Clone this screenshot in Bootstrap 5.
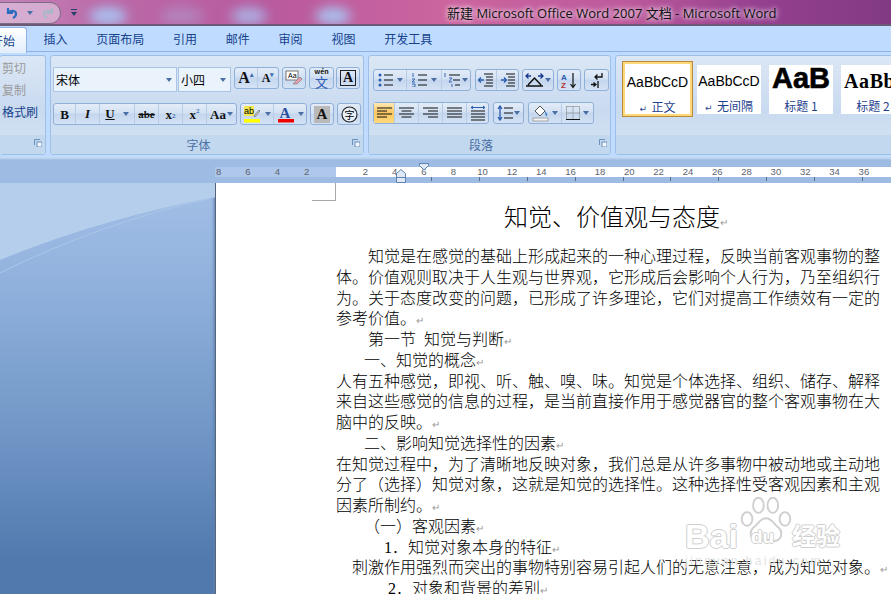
<!DOCTYPE html>
<html lang="zh-CN">
<head>
<meta charset="UTF-8" />
<title>新建 Microsoft Office Word 2007 文档 - Microsoft Word</title>
<link href="https://cdn.jsdelivr.net/npm/bootstrap@5.3.0/dist/css/bootstrap.min.css" rel="stylesheet" />
<style>
html, body { height: 594px; overflow: hidden; }
body { font-family: "Liberation Serif", "Noto Sans CJK SC", serif; background: #fff; color: #000; position: relative; }
.ui-font { font-family: "Noto Sans CJK SC", sans-serif; }
.win-title { height: 26px; background: linear-gradient(90deg, #c482b8 0, #bb6aa8 12%, #b85a9e 30%, #cc659f 50%, #bd5a9c 70%, #95408f 85%, #823a84 100%); border-bottom: 2px solid #6b5a75; position: relative; overflow: hidden; }
.win-blot { height: 18px; margin-top: 7px; border-radius: 50%; filter: blur(6px); background: #a9c0ee; flex: none; }
.qat-pill { width: 63px; height: 22px; margin-top: 2px; margin-left: -2px; border: 1px solid #7c6c84; border-radius: 0 11px 11px 0; background: rgba(226,205,228,.6); flex: none; }
.qat-more { margin: 9px 0 0 9px; width: 8px; flex: none; }
.win-name { position: absolute; left: 447px; top: 5px; font: 13px/16px "Open Sans", "Noto Sans CJK SC", sans-serif; color: #111; text-shadow: 0 0 4px #f6e6f2, 0 0 6px #f6e6f2; white-space: nowrap; }
.tab-bar { height: 26px; background: #bfdbff; border-bottom: 1px solid #8db2e3; font-size: 12px; color: #15428b; }
.tab-item { padding: 0 14.4px; line-height: 25px; white-space: nowrap; }
.tab-on { margin-left: -10px; padding: 0 12px 0 0; width: 37px; background: linear-gradient(#fff, #e3eefb); border: 1px solid #8db2e3; border-bottom: 0; border-radius: 0 3px 0 0; height: 26px; margin-top: 1px; margin-right: 2px; }
.rb-band { height: 105px; background: #bfdbff; padding-top: 3px; overflow: hidden; }
.rb-group { height: 100px; border: 1px solid #9ebfe6; border-radius: 3px; background: linear-gradient(#dbe7f5, #c9daf0 55%, #d6e5f5); position: relative; flex: none; }
.rb-clip { width: 46px; margin-right: 4px; border-left: 0; font-size: 12px; padding: 0 0 0 2px; }
.clip-line { height: 22px; line-height: 22px; color: #9a9a9a; }
.clip-line:first-child { margin-top: 1px; }
.clip-on { color: #15428b; }
.rb-font { width: 314px; margin-right: 4px; padding: 11px 0 0 2px; }
.rb-para { width: 243px; margin-right: 4px; padding: 13px 0 0 4px; }
.rb-style { width: 290px; }
.rb-foot { position: absolute; left: 0; right: 0; bottom: 0; height: 19px; background: #c2d8ee; color: #4a6fa5; font-size: 12px; text-align: center; line-height: 20px; padding-right: 17px; }
.rb-launch { position: absolute; right: 3px; bottom: 7px; width: 8px; height: 8px; display: block; }
.rb-row { height: 22px; gap: 3px; margin-bottom: 14px; }
.rb-box { height: 100%; border: 1px solid #8fb0d9; border-radius: 3px; background: linear-gradient(#e3ecf8, #d3e1f3 45%, #c4d6ee 50%, #d4e2f4); display: flex; align-items: stretch; flex: none; }
.rb-btn { display: flex; align-items: center; justify-content: center; border-right: 1px solid #b5cbe6; flex: none; font-size: 13px; line-height: 1; color: #111; }
.rb-btn:last-child { border-right: 0; }
.rb-active { background: linear-gradient(#fde9b0, #fbc65f 50%, #fdd97f); }
.rb-arrow { width: 0; height: 0; border: 3px solid transparent; border-top: 4px solid #4a6fa5; border-bottom: 0; margin-left: 3px; flex: none; }
.rb-combo { height: 25px; background: #eaf2fb; border: 1px solid #a9c4e4; display: flex; align-items: center; justify-content: space-between; padding: 0 4px 0 2px; font-size: 12px; flex: none; }
.tx-b { font-family: "Liberation Serif", serif; font-weight: 700; }
.style-gallery { padding: 5px 0 0 6px; }
.style-tile { height: 49px; background: #fff; margin-top: 4px; flex: none; text-align: center; overflow: hidden; white-space: nowrap; }
.style-tile-on { height: 56px; margin-top: 0; width: 71px; border: 1px solid #b78a3d; box-shadow: inset 0 0 0 2px #fcd878; padding-top: 4px; }
.style-demo { height: 33px; line-height: 33px; font-size: 14px; font-family: "Liberation Sans", sans-serif; color: #000; }
.style-name { font-size: 12px; line-height: 15px; color: #1f3f8f; }
.style-arrow { font-size: 9px; font-family: "DejaVu Sans", sans-serif; margin-right: 2px; }
.style-strong { font: 700 29px/27px "Liberation Sans", sans-serif; height: 33px; -webkit-text-stroke: .6px #000; }
.style-serif { font: 700 20px/33px "Liberation Serif", serif; text-align: left; padding-left: 3px; letter-spacing: .6px; }
.ruler-strip { height: 26px; background: linear-gradient(#c2d8ef 0, #c2d8ef 1px, #9dbbe3 3px, #9dbbe3 100%); padding-top: 10px; position: relative; overflow: hidden; }
.ruler-scale { height: 10px; background: linear-gradient(90deg, transparent 0, transparent 11px, #afc7ea 11px, #afc7ea 132px, #fff 132px); font: 9.5px/10px "Liberation Sans", sans-serif; color: #5c6470; width: 800px; margin-left: 204px; }
.ruler-scale span { width: 29.33px; text-align: center; flex: none; }
.ruler-ticks { height: 4px; margin-left: 431px; background: repeating-linear-gradient(90deg, #5d6f88 0, #5d6f88 1px, transparent 1px, transparent 47.9px); }
.ruler-cap { position: absolute; }
.work-area { height: 411px; }
.side-pane { width: 216px; flex: none; background: linear-gradient(#a2bfe6 0, #93b3de 22%, #7299c8 58%, #5279ad 92%, #5279ad 100%); border-right: 1px solid #55667e; box-shadow: inset -3px 0 3px -2px #5f7da8; }
.pane-swoosh { display: block; }
.doc-page { flex: 1; background: #fff; padding: 0 11px 0 120px; position: relative; overflow: hidden; }
.crop-mark { position: absolute; left: 96px; top: 0; width: 24px; height: 18px; border-right: 1px solid #a8a8a8; border-bottom: 1px solid #a8a8a8; }
.doc-head { font-size: 24px; line-height: 32px; margin: 19px 0 13px; text-align: center; padding-left: 16px; white-space: nowrap; font-weight: 300; }
.doc-line { font-size: 16px; line-height: 20.75px; margin: 0; text-align: justify; font-weight: 300; }
.doc-nowrap { white-space: nowrap; text-align: left; }
.ind-32 { text-indent: 32px; }
.ind-28 { text-indent: 28px; }
.ind-48 { text-indent: 48px; }
.ind-16 { text-indent: 16px; }
.ind-52 { text-indent: 52px; }
.ret-mark { color: #9a9a9a; font-size: 10px; line-height: 0; font-family: "DejaVu Sans", sans-serif; text-indent: 0; }
.bd-mark { position: absolute; left: 685px; top: 496px; width: 160px; height: 84px; pointer-events: none; }
.bd-word { position: absolute; color: #fff; font: 700 34px/40px "Liberation Sans", sans-serif; text-shadow: 1px 0 #cfcfcf, -1px 0 #cfcfcf, 0 1px #cfcfcf, 0 -1px #cfcfcf; }
.bd-du { font-size: 19px; line-height: 24px; }
.bd-cn { font: 700 24px/30px "Noto Sans CJK SC", sans-serif; }
.bd-url { position: absolute; left: 0; top: 58px; color: #e4e4e4; font: 12px/14px "Liberation Sans", sans-serif; letter-spacing: 2.4px; white-space: nowrap; }
</style>
</head>
<body>

<!-- Glass title bar -->
<div class="win-title d-flex">
  <div class="qat-pill d-flex align-items-center justify-content-center gap-2">
    <svg width="14" height="14" viewBox="0 0 14 14"><path d="M3 2v5h5M3 7c2-3 8-3 8 1 0 2-1 3-3 4" fill="none" stroke="#2b6cc0" stroke-width="2.200"/></svg>
    <span class="rb-arrow" style="margin:0"></span>
    <svg width="14" height="14" viewBox="0 0 14 14"><path d="M11 2v5H6M11 7C9 4 3 4 3 8c0 2 1 3 3 4" fill="none" stroke="#a9b7c9" stroke-width="2.200"/></svg>
  </div>
  <svg class="qat-more" width="8" height="8" viewBox="0 0 8 8"><path d="M1 .5h6" stroke="#27406b"/><path d="M1 3h6L4 7z" fill="#27406b"/></svg>
  <div class="win-blot" style="width:38px;margin-left:11px"></div>
  <div class="win-blot" style="width:42px;margin-left:34px;opacity:.35"></div>
  <div class="win-blot" style="width:36px;margin-left:28px;opacity:.8"></div>
  <div class="win-blot" style="width:36px;margin-left:48px"></div>
  <div class="win-name">新建 Microsoft Office Word 2007 文档 - Microsoft Word</div>
</div>

<!-- Tabs -->
<div class="tab-bar d-flex ui-font">
  <div class="tab-item tab-on">开始</div>
  <div class="tab-item">插入</div>
  <div class="tab-item">页面布局</div>
  <div class="tab-item">引用</div>
  <div class="tab-item">邮件</div>
  <div class="tab-item">审阅</div>
  <div class="tab-item">视图</div>
  <div class="tab-item">开发工具</div>
</div>

<!-- Ribbon -->
<div class="rb-band d-flex ui-font">
  <div class="rb-group rb-clip">
    <div class="clip-line">剪切</div>
    <div class="clip-line">复制</div>
    <div class="clip-line clip-on">格式刷</div>
    <div class="rb-foot"></div>
    <svg class="rb-launch" viewBox="0 0 8 8"><path d="M.5 6V.5H6" fill="none" stroke="#6d8fbc"/><rect x="3" y="3" width="5" height="5" fill="#f2f6fc" stroke="#6d8fbc"/></svg>
  </div>

  <div class="rb-group rb-font">
    <div class="rb-row d-flex">
      <div class="d-flex" style="gap:1px">
        <div class="rb-combo" style="width:124px">宋体<span class="rb-arrow"></span></div>
        <div class="rb-combo" style="width:53px">小四<span class="rb-arrow"></span></div>
      </div>
      <div class="rb-box">
        <div class="rb-btn tx-b" style="width:23px;font-size:16px">A<sup style="font-size:7px;color:#3f6fb5">▴</sup></div>
        <div class="rb-btn tx-b" style="width:20px;font-size:12px">A<sup style="font-size:7px;color:#3f6fb5">▾</sup></div>
      </div>
      <div class="rb-box"><div class="rb-btn" style="width:22px">
        <svg width="18" height="16" viewBox="0 0 18 16"><rect x="1" y="1" width="12" height="9" fill="#fff" stroke="#777"/><text x="3" y="8" font-size="7" font-family="Liberation Sans">Aa</text><path d="M8 14l7-7 2 2-5 5z" fill="#e8a0b0" stroke="#777" stroke-width=".6"/></svg>
      </div></div>
      <div class="rb-box"><div class="rb-btn" style="width:23px;flex-direction:column;font-size:7px;font-weight:700">
        <span style="color:#222">wén</span><span style="font-size:13px;color:#2f5cb5;font-weight:400">文</span>
      </div></div>
      <div class="rb-box" style="margin-left:-1px"><div class="rb-btn tx-b" style="width:22px"><span class="border border-dark" style="font-size:14px;padding:0 2px">A</span></div></div>
    </div>
    <div class="rb-row d-flex">
      <div class="rb-box">
        <div class="rb-btn tx-b" style="width:22px">B</div>
        <div class="rb-btn" style="width:24px;font:italic 700 13px 'Liberation Serif',serif">I</div>
        <div class="rb-btn" style="width:35px;font:700 13px 'Liberation Serif',serif"><u>U</u><span class="rb-arrow ms-2"></span></div>
        <div class="rb-btn" style="width:24px;font:700 11px 'Liberation Serif',serif"><s>abe</s></div>
        <div class="rb-btn tx-b" style="width:24px">x<sub style="font-size:7px;color:#3f6fb5">2</sub></div>
        <div class="rb-btn tx-b" style="width:24px">x<sup style="font-size:7px;color:#3f6fb5">2</sup></div>
        <div class="rb-btn tx-b" style="width:29px">Aa<span class="rb-arrow" style="margin-left:1px"></span></div>
      </div>
      <div class="rb-box">
        <div class="rb-btn" style="width:33px">
          <svg width="18" height="18" viewBox="0 0 18 18"><rect x="0" y="1" width="10" height="10" fill="#f5e84e"/><text x="0" y="9" font-size="9" font-family="Liberation Sans">ab</text><path d="M10 11l5-6 1 1-5 6z" fill="#ddd" stroke="#666" stroke-width=".7"/><rect x="0" y="14" width="16" height="3.500" fill="#ffff00"/></svg>
          <span class="rb-arrow"></span>
        </div>
        <div class="rb-btn" style="width:32px">
          <svg width="18" height="18" viewBox="0 0 18 18"><text x="2.500" y="12.500" font-size="15" font-weight="700" fill="#2a4f9e" font-family="Liberation Serif">A</text><rect x="1" y="14" width="16" height="3.500" fill="#f00000"/></svg>
          <span class="rb-arrow"></span>
        </div>
      </div>
      <div class="rb-box"><div class="rb-btn tx-b" style="width:22px"><span style="background:#b9b9b9;font-size:15px;padding:1px 3px">A</span></div></div>
      <div class="rb-box"><div class="rb-btn" style="width:22px">
        <svg width="17" height="17" viewBox="0 0 17 17"><circle cx="8.500" cy="8.500" r="7.500" fill="#e6eef8" stroke="#222" stroke-width="1.100"/><text x="8.500" y="12.500" text-anchor="middle" font-size="10" font-family="Noto Sans CJK SC">字</text></svg>
      </div></div>
    </div>
    <div class="rb-foot">字体</div>
    <svg class="rb-launch" viewBox="0 0 8 8"><path d="M.5 6V.5H6" fill="none" stroke="#6d8fbc"/><rect x="3" y="3" width="5" height="5" fill="#f2f6fc" stroke="#6d8fbc"/></svg>
  </div>

  <div class="rb-group rb-para">
    <div class="rb-row d-flex" style="margin-bottom:11px">
      <div class="rb-box">
        <div class="rb-btn" style="width:33px"><svg width="16" height="14" viewBox="0 0 16 14"><path d="M6 2h9M6 7h9M6 12h9" stroke="#111" stroke-width="1.200"/><circle cx="2" cy="2" r="1.500" fill="#2a5cad"/><circle cx="2" cy="7" r="1.500" fill="#2a5cad"/><circle cx="2" cy="12" r="1.500" fill="#2a5cad"/></svg><span class="rb-arrow"></span></div>
        <div class="rb-btn" style="width:35px"><svg width="16" height="14" viewBox="0 0 16 14"><path d="M6 2h9M6 7h9M6 12h9" stroke="#111" stroke-width="1.200"/><path d="M1 0v4M0 6h3L0 9h3M0 11h3v3H0" stroke="#2a5cad" fill="none" stroke-width=".9"/></svg><span class="rb-arrow"></span></div>
        <div class="rb-btn" style="width:28px"><svg width="17" height="15" viewBox="0 0 17 15"><path d="M5 2h11M9 7h7M11 12h5" stroke="#111" stroke-width="1.200"/><path d="M1 0v4M5 5h3L5 9h3M8 11v3" stroke="#2a5cad" fill="none" stroke-width=".9"/></svg><span class="rb-arrow" style="margin-left:1px"></span></div>
      </div>
      <div class="rb-box" style="margin-left:1px">
        <div class="rb-btn" style="width:21px"><svg width="16" height="14" viewBox="0 0 16 14"><path d="M6 1h9M8 4h7M8 7h7M8 10h7M6 13h9" stroke="#111" stroke-width="1.200"/><path d="M6 7H1m2-2.500L.5 7 3 9.500" stroke="#2a5cad" fill="none" stroke-width="1.300"/></svg></div>
        <div class="rb-btn" style="width:21px"><svg width="16" height="14" viewBox="0 0 16 14"><path d="M6 1h9M8 4h7M8 7h7M8 10h7M6 13h9" stroke="#111" stroke-width="1.200"/><path d="M1 7h5M4 4.500 6.500 7 4 9.500" stroke="#2a5cad" fill="none" stroke-width="1.300"/></svg></div>
      </div>
      <div class="rb-box">
        <div class="rb-btn" style="width:30px"><svg width="19" height="14" viewBox="0 0 19 14"><path d="M3 12 9.500 5 16 12M1 13h17" stroke="#111" stroke-width="1.500" fill="none"/><path d="M1 3h5M3.500 .5 1 3l2.500 2.500M13 3h5M15.500 .5 18 3l-2.500 2.500" stroke="#14398a" stroke-width="1.300" fill="none"/></svg><span class="rb-arrow" style="margin-left:1px"></span></div>
      </div>
      <div class="rb-box">
        <div class="rb-btn" style="width:22px"><svg width="17" height="17" viewBox="0 0 17 17"><text x="0" y="8" font-size="8" font-weight="700" fill="#2a5cad" font-family="Liberation Sans">A</text><text x="0" y="16" font-size="8" font-weight="700" fill="#b03030" font-family="Liberation Sans">Z</text><path d="M12 1v14M9.500 12l2.500 3.500 2.500-3.500" stroke="#111" fill="none" stroke-width="1.200"/></svg></div>
      </div>
      <div class="rb-box">
        <div class="rb-btn" style="width:23px"><svg width="14" height="16" viewBox="0 0 14 16"><path d="M12 1v4H5M7.500 2.500 5 5l2.500 2.500M8 9v7M1 12.500h5M3.500 10.500 6 12.500 3.500 14.500" stroke="#111" stroke-width="1.300" fill="none"/></svg></div>
      </div>
    </div>
    <div class="rb-row d-flex" style="gap:4px">
      <div class="rb-box">
        <div class="rb-btn rb-active" style="width:21px"><svg width="15" height="12" viewBox="0 0 15 12"><path d="M0 1h15M0 4h10M0 7h15M0 10h10" stroke="#111" stroke-width="1.200"/></svg></div>
        <div class="rb-btn" style="width:24px"><svg width="15" height="12" viewBox="0 0 15 12"><path d="M0 1h15M2.500 4h10M0 7h15M2.500 10h10" stroke="#111" stroke-width="1.200"/></svg></div>
        <div class="rb-btn" style="width:24px"><svg width="15" height="12" viewBox="0 0 15 12"><path d="M0 1h15M5 4h10M0 7h15M5 10h10" stroke="#111" stroke-width="1.200"/></svg></div>
        <div class="rb-btn" style="width:24px"><svg width="15" height="12" viewBox="0 0 15 12"><path d="M0 1h15M0 4h15M0 7h15M0 10h15" stroke="#111" stroke-width="1.200"/></svg></div>
        <div class="rb-btn" style="width:21px"><svg width="16" height="16" viewBox="0 0 16 16"><path d="M1 6h14M1 9h14M1 12h14M1 15h14" stroke="#111" stroke-width="1.100"/><path d="M1 2.500h14M3 1 1 2.500 3 4M13 1l2 1.500L13 4" stroke="#2a5cad" fill="none"/></svg></div>
      </div>
      <div class="rb-box">
        <div class="rb-btn" style="width:29px"><svg width="16" height="16" viewBox="0 0 16 16"><path d="M7 3h9M7 8h9M7 13h9" stroke="#111" stroke-width="1.200"/><path d="M3 1v14M1 4l2-3 2 3M1 12l2 3 2-3" stroke="#2a5cad" fill="none" stroke-width="1.300"/></svg><span class="rb-arrow" style="margin-left:1px"></span></div>
      </div>
      <div class="rb-box">
        <div class="rb-btn" style="width:33px"><svg width="17" height="18" viewBox="0 0 17 18"><path d="M3 7l5-5 5 5-5 5z" fill="#fff" stroke="#555"/><path d="M13 7c2 2 3 4 2 5s-2-1-2-5z" fill="#4a84c8"/><rect x="1" y="14" width="15" height="3" fill="#f3f3f3" stroke="#888" stroke-width=".7"/></svg><span class="rb-arrow"></span></div>
        <div class="rb-btn" style="width:31px"><svg width="14" height="14" viewBox="0 0 14 14"><path d="M.5.500h13v13M.5.500v13M7 .5v13M.5 7h13" stroke="#777" stroke-dasharray="1 1" fill="none"/><path d="M0 13.500h14" stroke="#111"/></svg><span class="rb-arrow"></span></div>
      </div>
    </div>
    <div class="rb-foot">段落</div>
    <svg class="rb-launch" viewBox="0 0 8 8"><path d="M.5 6V.5H6" fill="none" stroke="#6d8fbc"/><rect x="3" y="3" width="5" height="5" fill="#f2f6fc" stroke="#6d8fbc"/></svg>
  </div>

  <div class="rb-group rb-style">
    <div class="d-flex style-gallery">
      <div class="style-tile style-tile-on"><div class="style-demo">AaBbCcD</div><div class="style-name"><span class="style-arrow">↵</span> 正文</div></div>
      <div class="style-tile" style="width:64px;margin-left:4px"><div class="style-demo">AaBbCcD</div><div class="style-name"><span class="style-arrow">↵</span> 无间隔</div></div>
      <div class="style-tile" style="width:64px;margin-left:8px"><div class="style-demo style-strong">AaB</div><div class="style-name">标题 1</div></div>
      <div class="style-tile" style="width:64px;margin-left:8px"><div class="style-demo style-serif">AaBb</div><div class="style-name">标题 2</div></div>
    </div>
    <div class="rb-foot"></div>
  </div>
</div>

<!-- Ruler -->
<div class="ruler-strip">
  <div class="ruler-scale d-flex">
    <span>8</span><span>6</span><span>4</span><span>2</span><span></span><span>2</span><span>4</span><span>6</span><span>8</span><span>10</span><span>12</span><span>14</span><span>16</span><span>18</span><span>20</span><span>22</span><span>24</span><span>26</span><span>28</span><span>30</span><span>32</span><span>34</span><span>36</span>
  </div>
  <div class="ruler-ticks"></div>
  <svg class="ruler-cap" style="left:419px;top:6px" width="10" height="8" viewBox="0 0 10 8"><path d="M.5.500h9v2L5 7 .5 2.500z" fill="#dfe8f5" stroke="#5f82b0"/></svg>
  <svg class="ruler-cap" style="left:396px;top:12px" width="10" height="14" viewBox="0 0 10 14"><path d="M.5 4.500l4.500-4 4.500 4v9H.5zM.5 8.500h9" fill="#dfe8f5" stroke="#5f82b0"/></svg>
</div>

<!-- Document -->
<div class="work-area d-flex">
  <div class="side-pane">
    <svg class="pane-swoosh" width="215" height="90" viewBox="0 0 215 90"><path d="M0 77Q100 36 215 14V0H0Z" fill="#b5ceec"/><path d="M0 90Q100 40 215 14" fill="none" stroke="#acc6e9" stroke-width="1"/></svg>
  </div>
  <div class="doc-page">
    <div class="crop-mark"></div>
    <div class="doc-head">知觉、价值观与态度<span class="ret-mark">↵</span></div>
    <p class="doc-line ind-32">知觉是在感觉的基础上形成起来的一种心理过程，反映当前客观事物的整体。价值观则取决于人生观与世界观，它形成后会影响个人行为，乃至组织行为。关于态度改变的问题，已形成了许多理论，它们对提高工作绩效有一定的参考价值。<span class="ret-mark">↵</span></p>
    <p class="doc-line doc-nowrap ind-32">第一节&ensp;知觉与判断<span class="ret-mark">↵</span></p>
    <p class="doc-line doc-nowrap ind-28">一、知觉的概念<span class="ret-mark">↵</span></p>
    <p class="doc-line">人有五种感觉，即视、听、触、嗅、味。知觉是个体选择、组织、储存、解释来自这些感觉的信息的过程，是当前直接作用于感觉器官的整个客观事物在大脑中的反映。<span class="ret-mark">↵</span></p>
    <p class="doc-line doc-nowrap ind-28">二、影响知觉选择性的因素<span class="ret-mark">↵</span></p>
    <p class="doc-line">在知觉过程中，为了清晰地反映对象，我们总是从许多事物中被动地或主动地分了（选择）知觉对象，这就是知觉的选择性。这种选择性受客观因素和主观因素所制约。<span class="ret-mark">↵</span></p>
    <p class="doc-line doc-nowrap ind-28">（一）客观因素<span class="ret-mark">↵</span></p>
    <p class="doc-line doc-nowrap ind-48">1．知觉对象本身的特征<span class="ret-mark">↵</span></p>
    <p class="doc-line doc-nowrap ind-16">刺激作用强烈而突出的事物特别容易引起人们的无意注意，成为知觉对象。<span class="ret-mark">↵</span></p>
    <p class="doc-line doc-nowrap ind-52">2．对象和背景的差别<span class="ret-mark">↵</span></p>
  </div>
</div>

<!-- Watermark -->
<div class="bd-mark">
  <svg class="position-absolute" style="left:54px;top:1px" width="54" height="50" viewBox="0 0 70 66" fill="none" stroke="#cfcfcf" stroke-width="2.500">
    <ellipse cx="10" cy="29" rx="7" ry="9"/><ellipse cx="25" cy="11" rx="7" ry="10"/><ellipse cx="44" cy="11" rx="7" ry="10"/><ellipse cx="60" cy="29" rx="7" ry="9"/>
    <path d="M35 28c8 0 10 8 16 12 7 5 5 18-5 18-4 0-7-2-11-2s-7 2-11 2c-10 0-12-13-5-18 6-4 8-12 16-12z"/>
  </svg>
  <div class="bd-word" style="left:0;top:20px">Bai</div>
  <div class="bd-word bd-du" style="left:66px;top:29px">du</div>
  <div class="bd-word bd-cn" style="left:107px;top:24px">经验</div>
  <div class="bd-url">jingyan.baidu.com</div>
</div>

<script src="https://cdn.jsdelivr.net/npm/bootstrap@5.3.0/dist/js/bootstrap.bundle.min.js"></script>
</body>
</html>
